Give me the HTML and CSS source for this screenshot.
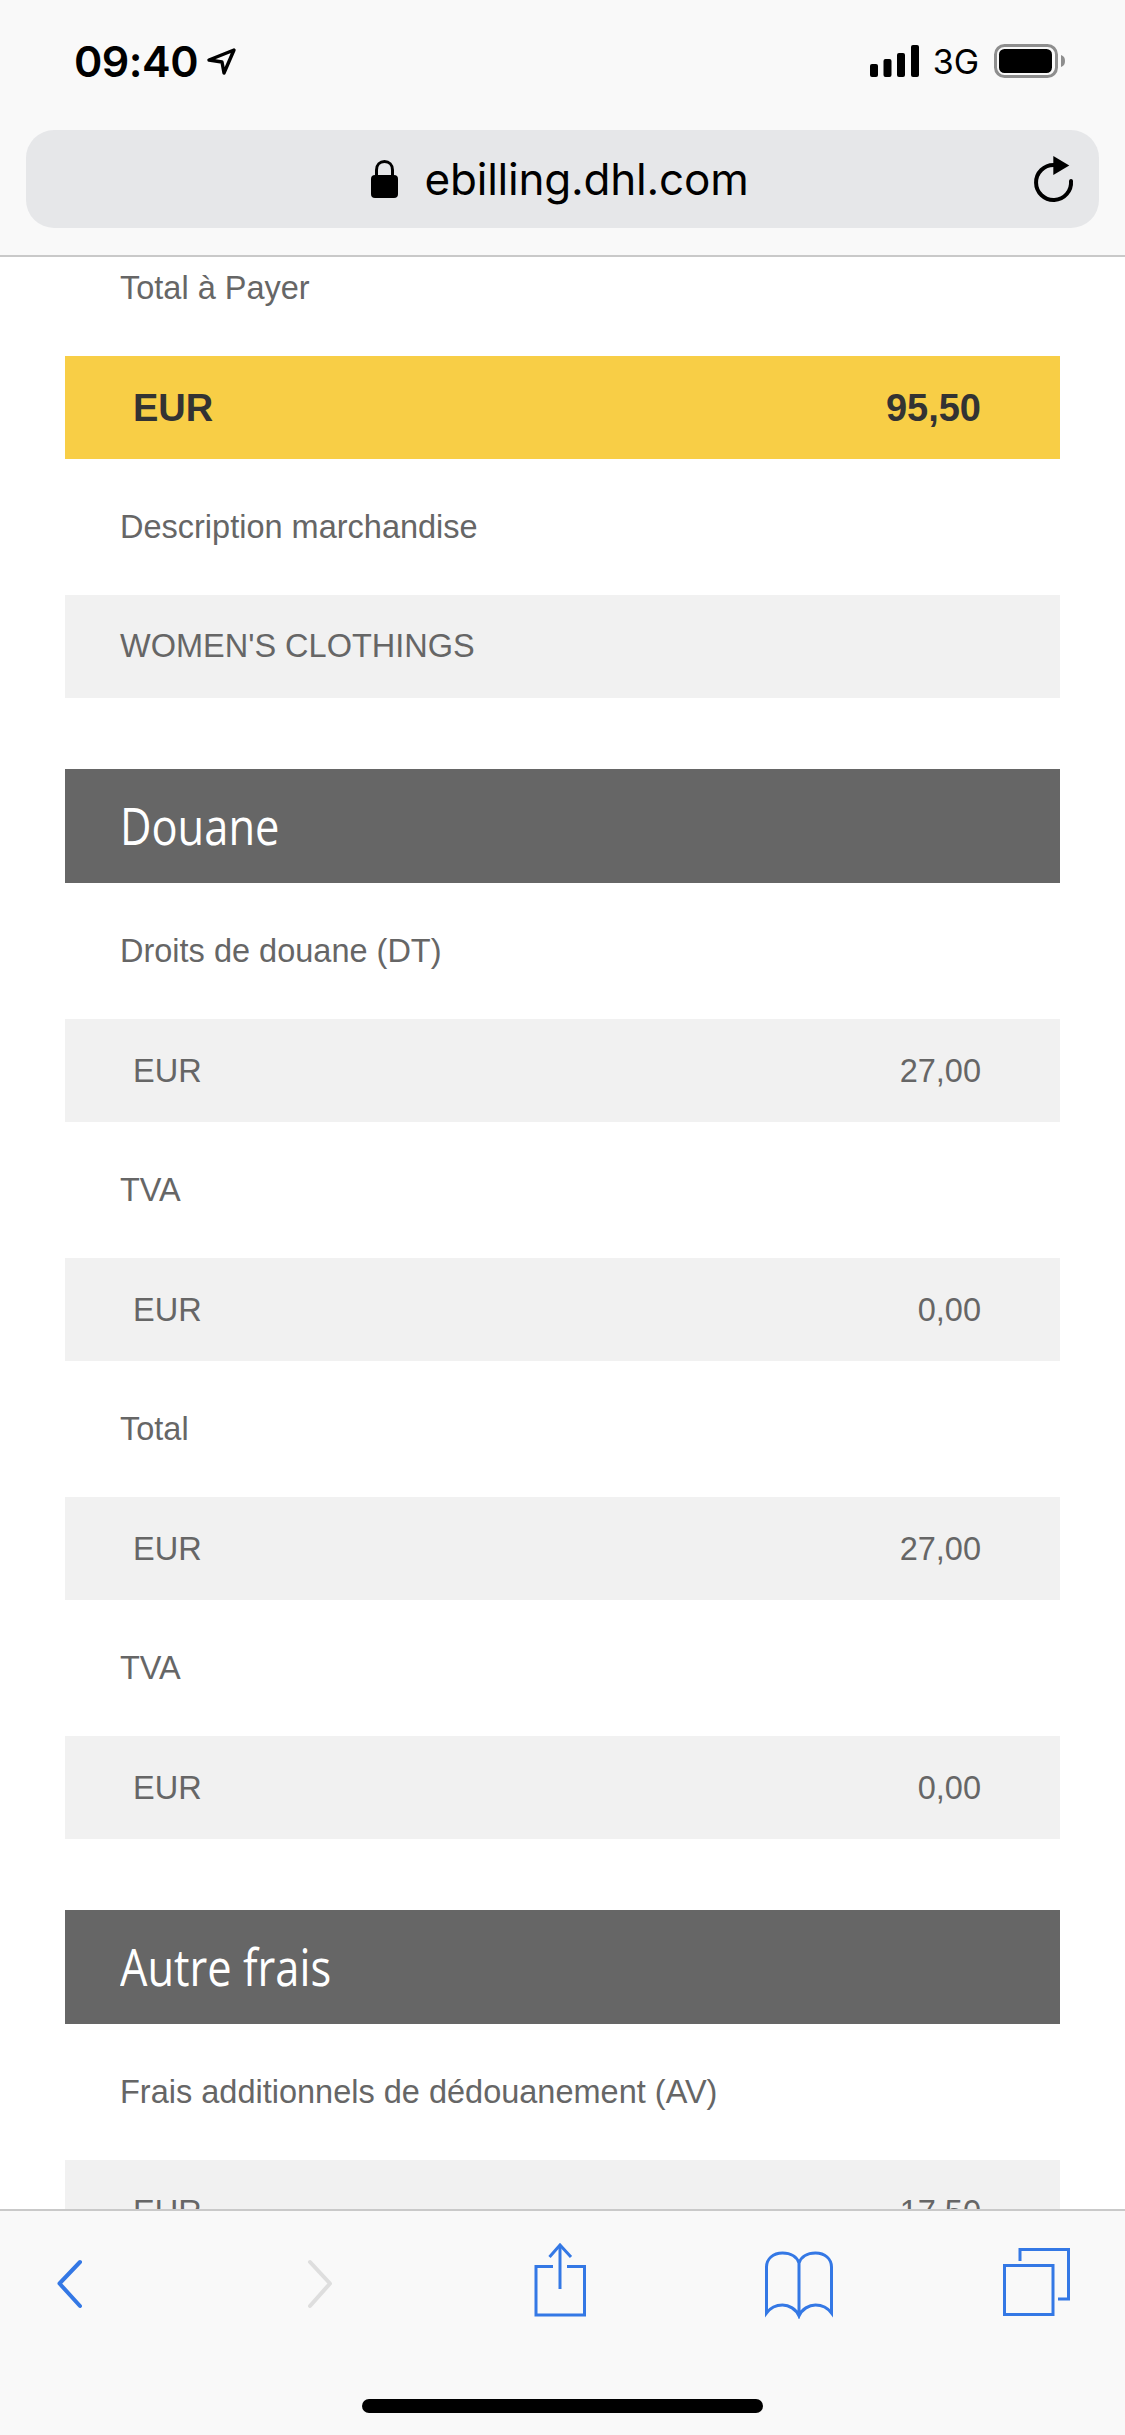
FILE: index.html
```html
<!DOCTYPE html>
<html lang="fr">

<head>
    <meta charset="UTF-8" />
    <meta name="viewport" content="width=device-width, initial-scale=1.0" />
    <title>ebilling.dhl.com</title>
    <link rel="stylesheet" href="styles.css">
</head>

<body>
    <div class="phone">
        <header class="top-bar">
            <div class="status-bar">
                <div class="status-left">
                    <span class="clock">09:40</span>
                    <svg class="location-icon" width="31" height="29" viewBox="0 0 31 29">
                        <path d="M28 3 L3 13 L16 15 L18 26 Z" fill="none" stroke="#000" stroke-width="3.4" stroke-linejoin="round" />
                    </svg>
                </div>
                <div class="status-right">
                    <svg class="signal-icon" width="49" height="32" viewBox="0 0 49 32">
                        <rect x="0" y="19" width="8" height="13" rx="2" />
                        <rect x="13.5" y="14" width="8" height="18" rx="2" />
                        <rect x="27" y="8" width="8" height="24" rx="2" />
                        <rect x="41" y="0" width="8" height="32" rx="2" />
                    </svg>
                    <span class="network">3G</span>
                    <svg class="battery-icon" width="72" height="34" viewBox="0 0 72 34">
                        <rect x="1.5" y="1.5" width="61" height="31" rx="9" fill="none" stroke="#8e8e8e" stroke-width="3" />
                        <rect x="5" y="5" width="53" height="24" rx="5.5" fill="#000" />
                        <path d="M67 11 C70 12 71 14 71 17 C71 20 70 22 67 23 Z" fill="#8e8e8e" />
                    </svg>
                </div>
            </div>
            <div class="url-bar">
                <div class="url-site">
                    <svg class="lock-icon" width="27" height="38" viewBox="0 0 27 38">
                        <path d="M5.500 17 V10 C5.500 4.500 9 1.500 13.500 1.500 C18 1.500 21.500 4.500 21.500 10 V17" fill="none" stroke="#000" stroke-width="3" />
                        <rect x="0" y="15" width="27" height="23" rx="4" fill="#000" />
                    </svg>
                    <span class="url-text">ebilling.dhl.com</span>
                </div>
                <svg class="reload-icon" width="42" height="48" viewBox="0 0 42 48">
                    <path d="M39 26 A17.500 17.500 0 1 1 22 10" fill="none" stroke="#000" stroke-width="4" stroke-linecap="round" />
                    <path d="M21.300 1 L37.300 10.500 L21.300 20 Z" fill="#000" />
                </svg>
            </div>
        </header>

        <main class="viewport">
            <div class="page">
                <p class="field-label">Total à Payer</p>
                <div class="amount-row amount-total"><span>EUR</span><span>95,50</span></div>
                <p class="field-label">Description marchandise</p>
                <div class="text-row">WOMEN'S CLOTHINGS</div>

                <h2 class="section-title"><span class="section-name">Douane</span></h2>
                <p class="field-label">Droits de douane (DT)</p>
                <div class="amount-row"><span>EUR</span><span>27,00</span></div>
                <p class="field-label">TVA</p>
                <div class="amount-row"><span>EUR</span><span>0,00</span></div>
                <p class="field-label">Total</p>
                <div class="amount-row"><span>EUR</span><span>27,00</span></div>
                <p class="field-label">TVA</p>
                <div class="amount-row"><span>EUR</span><span>0,00</span></div>

                <h2 class="section-title"><span class="section-name">Autre frais</span></h2>
                <p class="field-label">Frais additionnels de dédouanement (AV)</p>
                <div class="amount-row"><span>EUR</span><span>17,50</span></div>
            </div>
        </main>

        <footer class="tool-bar">
            <div class="tool-icons">
                <svg class="tool-back" width="29" height="76" viewBox="0 0 29 76">
                    <path d="M25 19 L4.500 40.500 L25 63" />
                </svg>
                <svg class="tool-forward" width="29" height="76" viewBox="0 0 29 76">
                    <path d="M4 19 L24 40.500 L4 63" />
                </svg>
                <svg class="tool-share" width="56" height="76" viewBox="0 0 56 76">
                    <path d="M21 23.500 H4 V72 H52.500 V23.500 H35" />
                    <path d="M28 2 V46" />
                    <path d="M17.500 14 L28 2 L39 14" />
                </svg>
                <svg class="tool-book" width="72" height="76" viewBox="0 0 72 76">
                    <path d="M36 73 V20 C34 14 28 10 19.500 10 C10 10 3.500 16 3.500 24 V70 C8 64 13 62 19.500 62 C26 62 33 66 36 73 C39 66 46 62 52.500 62 C59 62 64 64 68.500 70 V24 C68.500 16 62 10 52.500 10 C44 10 38 14 36 20" />
                </svg>
                <svg class="tool-tabs" width="71" height="76" viewBox="0 0 71 76">
                    <rect x="3.500" y="22.500" width="48.500" height="49" />
                    <path d="M19 18 V6.500 H67.500 V56 H57" />
                </svg>
            </div>
            <div class="home-indicator"></div>
        </footer>
    </div>
</body>

</html>
```

FILE: styles.css
```css
* {
    box-sizing: border-box;
}

html,
body {
    margin: 0;
    padding: 0;
}

.phone {
    display: flex;
    flex-direction: column;
    width: 1125px;
    height: 2435px;
    overflow: hidden;
    background-color: #fff;
    font-family: "Liberation Sans", Arial, sans-serif;
}

/* top browser chrome */
.top-bar {
    height: 257px;
    flex-shrink: 0;
    padding: 0 26px;
    background-color: #f9f9f9;
    border-bottom: 2px solid #c9c9c9;
}

.status-bar {
    display: flex;
    justify-content: space-between;
    align-items: center;
    height: 122px;
    padding: 0 33px 0 48px;
}

.status-left,
.status-right {
    display: flex;
    align-items: center;
}

.clock {
    font-family: Inter, sans-serif;
    font-size: 43px;
    font-weight: 600;
    letter-spacing: -0.5px;
    color: #000;
}

.location-icon {
    margin-left: 8px;
}

.signal-icon {
    margin-right: 14px;
}

.network {
    font-family: Inter, sans-serif;
    font-size: 34px;
    color: #000;
    margin-right: 15px;
}

.url-bar {
    display: grid;
    grid-template-columns: 1fr auto 1fr;
    align-items: center;
    height: 98px;
    margin-top: 8px;
    padding: 0 25px;
    background-color: #e6e7e9;
    border-radius: 28px;
}

.url-site {
    grid-column: 2;
    display: flex;
    align-items: center;
    gap: 26px;
    margin-right: 5px;
}

.url-text {
    font-family: Inter, sans-serif;
    font-size: 44px;
    letter-spacing: -0.2px;
    color: #000;
}

.reload-icon {
    grid-column: 3;
    justify-self: end;
}

/* page content, scrolled a little */
.viewport {
    flex: 1;
    min-height: 0;
    overflow: hidden;
}

.page {
    margin-top: -37px;
    padding: 0 65px;
    color: #666;
    font-size: 32.5px;
}

.field-label {
    display: flex;
    align-items: center;
    height: 136px;
    margin: 0;
    padding-left: 55px;
}

.amount-row {
    display: flex;
    justify-content: space-between;
    align-items: center;
    height: 103px;
    padding: 2px 79px 0 68px;
    background-color: #f1f1f1;
}

.amount-total {
    background-color: #f8ce46;
    color: #333;
    font-size: 38px;
    font-weight: bold;
}

.text-row {
    display: flex;
    align-items: center;
    height: 103px;
    padding-left: 55px;
    background-color: #f1f1f1;
}

.section-title {
    display: flex;
    align-items: center;
    height: 114px;
    margin: 71px 0 0;
    padding: 0 0 3px 55px;
    background-color: #666;
    color: #fff;
    font-family: "Open Sans", sans-serif;
    font-size: 52px;
    font-weight: 400;
}

/* the heading face is narrower than anything installed */
.section-name {
    display: inline-block;
    transform: scaleX(0.835);
    transform-origin: left center;
}

/* bottom browser chrome */
.tool-bar {
    height: 226px;
    flex-shrink: 0;
    padding-top: 32px;
    background-color: #f9f9f9;
    border-top: 2px solid #c9c9c9;
}

.tool-icons {
    display: flex;
    height: 76px;
}

.tool-icons svg {
    fill: none;
    stroke: #3478e5;
    stroke-width: 3;
}

.tool-back {
    margin-left: 55px;
}

.tool-icons .tool-back,
.tool-icons .tool-forward {
    stroke-width: 4;
    stroke-linecap: round;
    stroke-linejoin: round;
}

.tool-icons .tool-forward {
    margin-left: 222px;
    stroke: #dedede;
}

.tool-share {
    margin-left: 197px;
}

.tool-book {
    margin-left: 175px;
}

.tool-tabs {
    margin-left: 166px;
}

.home-indicator {
    width: 401px;
    height: 14px;
    margin: 80px auto 0;
    border-radius: 7px;
    background-color: #000;
}
```
